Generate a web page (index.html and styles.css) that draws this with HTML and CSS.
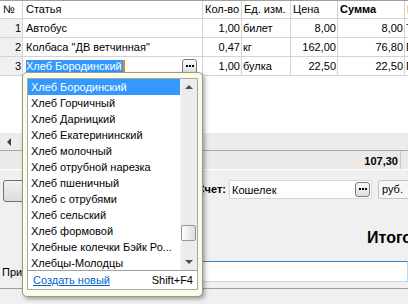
FILE: index.html
```html
<!DOCTYPE html>
<html>
<head>
<meta charset="utf-8">
<link rel="stylesheet" href="styles.css">
</head>
<body>
<div class="app">
  <div class="grid">
    <div class="row head">
      <div class="c num l">№</div>
      <div class="c art">Статья</div>
      <div class="c">Кол-во</div>
      <div class="c">Ед. изм.</div>
      <div class="c">Цена</div>
      <div class="c b">Сумма</div>
      <div class="c">Категория</div>
    </div>
    <div class="row">
      <div class="c num">1</div>
      <div class="c art">Автобус</div>
      <div class="c r">1,00</div>
      <div class="c">билет</div>
      <div class="c r">8,00</div>
      <div class="c r">8,00</div>
      <div class="c">Транспорт</div>
    </div>
    <div class="row">
      <div class="c num">2</div>
      <div class="c art">Колбаса "ДВ ветчинная"</div>
      <div class="c r">0,47</div>
      <div class="c">кг</div>
      <div class="c r">162,00</div>
      <div class="c r">76,80</div>
      <div class="c">Продукты</div>
    </div>
    <div class="row">
      <div class="c num">3</div>
      <div class="c art edit"><span class="sel">Хлеб Бородинский</span><span class="dots-btn"><svg width="9" height="3" viewBox="0 0 9 3"><rect x="0" y="0" width="2" height="2" fill="#000"/><rect x="3" y="0" width="2" height="2" fill="#000"/><rect x="6" y="0" width="2" height="2" fill="#000"/></svg></span></div>
      <div class="c r">1,00</div>
      <div class="c">булка</div>
      <div class="c r">22,50</div>
      <div class="c r">22,50</div>
      <div class="c">Продукты</div>
    </div>
  </div>
  <div class="grid-empty"></div>
  <div class="hscroll"><span class="hs-left"><span class="tri-left"></span></span></div>
  <div class="total"><span class="total-val">107,30</span></div>
  <div class="form">
    <div class="acct-row">
      <div class="btn-add"></div>
      <div class="acct-label">Счет:</div>
      <div class="acct-input"><span class="acct-text">Кошелек</span><span class="dots-btn small"><svg width="9" height="3" viewBox="0 0 9 3"><rect x="0" y="0" width="2" height="2" fill="#000"/><rect x="3" y="0" width="2" height="2" fill="#000"/><rect x="6" y="0" width="2" height="2" fill="#000"/></svg></span></div>
      <div class="combo">руб.</div>
    </div>
    <div class="itog">Итого:</div>
    <div class="note-row">
      <span class="note-label">Примечание:</span>
      <div class="note-input"></div>
    </div>
  </div>
  <div class="status"></div>

  <div class="popup">
    <div class="plist">
      <div class="pitems-wrap">
        <div class="pitems">
          <div class="pi selected">Хлеб Бородинский</div>
          <div class="pi">Хлеб Горчичный</div>
          <div class="pi">Хлеб Дарницкий</div>
          <div class="pi">Хлеб Екатерининский</div>
          <div class="pi">Хлеб молочный</div>
          <div class="pi">Хлеб отрубной нарезка</div>
          <div class="pi">Хлеб пшеничный</div>
          <div class="pi">Хлеб с отрубями</div>
          <div class="pi">Хлеб сельский</div>
          <div class="pi">Хлеб формовой</div>
          <div class="pi">Хлебные колечки Бэйк Ро...</div>
          <div class="pi">Хлебцы-Молодцы</div>
        </div>
        <div class="sb">
          <div class="sb-btn"><span class="tri-up"></span></div>
          <div class="sb-track"><div class="sb-thumb"></div></div>
          <div class="sb-btn"><span class="tri-down"></span></div>
        </div>
      </div>
      <div class="plink">
        <span class="link">Создать новый</span>
        <span class="key">Shift+F4</span>
      </div>
    </div>
  </div>
</div>
</body>
</html>
```

FILE: styles.css
```css
* { box-sizing: border-box; }
html, body { margin: 0; padding: 0; }
body {
  width: 408px;
  height: 304px;
  overflow: hidden;
  background: #f0f0f0;
  font-family: "Liberation Sans", Arial, sans-serif;
  font-size: 11px;
  color: #000;
}
.app {
  position: relative;
  width: 408px;
  height: 304px;
  overflow: hidden;
}

/* grid */
.grid {
  width: 408px;
  overflow: hidden;
  background: #fff;
  border-top: 1px solid #a0a0a0;
}
.row {
  display: grid;
  grid-template-columns: 23px 180px 39px 49px 47px 67px 90px;
  height: 19px;
  border-bottom: 1px solid #d4d4d4;
  width: 495px;
}
.row.head { height: 18px; }
.c {
  border-right: 1px solid #d4d4d4;
  padding: 0 1px 0 1px;
  line-height: 18px;
  white-space: nowrap;
  overflow: hidden;
}
.head .c { line-height: 17px; padding-left: 2px; }
.c.num { text-align: right; background: #f0f0f0; padding-right: 1px; }
.head .c.num { text-align: left; background: #fff; padding-left: 3px; }
.c.art { padding-left: 3px; }
.c.r { text-align: right; }
.c.b { font-weight: bold; }

.edit {
  display: flex;
  align-items: center;
  padding-right: 5px;
}
.sel {
  background: #3399ff;
  color: #fff;
  line-height: 13px;
  padding-right: 1px;
  border-right: 2px solid #e8871e;
}
.dots-btn {
  margin-left: auto;
  flex-shrink: 0;
  width: 15px;
  height: 15px;
  border: 1px solid #7a7a7a;
  border-radius: 3px;
  background: linear-gradient(#fafafa, #dedede);
  display: flex;
  align-items: center;
  justify-content: center;
}
.dots-btn svg { display: block; margin-left: 1px; }

.grid-empty { height: 57px; background: #fff; }
.hscroll {
  height: 17px;
  background: #ececec;
  display: flex;
}
.hs-left {
  width: 17px;
  display: flex;
  align-items: center;
  justify-content: center;
}
.tri-left {
  width: 0; height: 0;
  border-top: 4px solid transparent;
  border-bottom: 4px solid transparent;
  border-right: 4px solid #404040;
}
.total {
  height: 20px;
  background: #ece9e9;
  border-top: 1px solid #a8a8a8;
  border-bottom: 1px solid #fff;
  display: flex;
  justify-content: flex-end;
  padding-right: 7px;
}
.total-val {
  font-weight: bold;
  border-right: 1px solid #c8c8c8;
  padding-right: 2px;
  line-height: 20px;
}

/* form */
.form { padding-top: 10px; }
.acct-row {
  display: flex;
  align-items: flex-start;
}
.acct-row > * { flex-shrink: 0; }
.btn-add {
  width: 120px;
  height: 22px;
  margin-left: 3px;
  border: 1px solid #707070;
  border-radius: 3px;
  background: linear-gradient(#f2f2f2, #dcdcdc);
}
.acct-label {
  width: 103px;
  text-align: right;
  font-weight: bold;
  line-height: 19px;
}
.acct-input {
  margin-left: 3px;
  width: 143px;
  height: 19px;
  background: #fff;
  border: 1px solid #d6d6d6;
  display: flex;
  align-items: center;
  padding: 0 1px 0 2px;
}
.acct-text { flex: 1; }
.combo {
  margin-left: 6px;
  width: 50px;
  height: 19px;
  border: 1px solid #c4c4c4;
  border-radius: 2px;
  background: #f6f6f6;
  padding-left: 3px;
  line-height: 17px;
}
.itog {
  margin-top: 26px;
  padding-left: 367px;
  font-size: 16px;
  font-weight: bold;
  line-height: 20px;
  white-space: nowrap;
}
.note-row {
  margin-top: 13px;
  display: flex;
  align-items: center;
}
.note-label { padding-left: 2px; width: 70px; flex-shrink: 0; white-space: nowrap; overflow: hidden; }
.note-input {
  flex: 1;
  height: 21px;
  background: #fff;
  border: 1px solid #b9d7f0;
  border-top-color: #3d83bd;
}
.status {
  position: absolute;
  left: 0;
  top: 288px;
  width: 408px;
  height: 16px;
  border-top: 1px solid #a0a0a0;
  background: #f0f0f0;
}

/* popup */
.popup {
  position: absolute;
  left: 22px;
  top: 72px;
  width: 181px;
  height: 225px;
  background: #fbfbe6;
  border: 1px solid #9a9a8a;
  border-radius: 5px;
  box-shadow: 2px 2px 4px rgba(0,0,0,0.35);
  padding: 5px 4px 5px 4px;
}
.plist {
  border: 1px solid #a5a9ae;
  background: #fff;
}
.pitems-wrap {
  display: flex;
  height: 192px;
  border-bottom: 1px solid #a0a0a0;
}
.pitems { width: 152px; }
.pi {
  height: 16px;
  line-height: 16px;
  padding-left: 3px;
  white-space: nowrap;
  overflow: hidden;
}
.pi.selected { background: #3399ff; color: #fff; }
.sb {
  width: 17px;
  display: flex;
  flex-direction: column;
  background: #ececec;
  border-left: 1px solid #f8f8f8;
}
.sb-btn {
  height: 16px;
  display: flex;
  align-items: center;
  justify-content: center;
}
.tri-up {
  width: 0; height: 0;
  border-left: 4px solid transparent;
  border-right: 4px solid transparent;
  border-bottom: 4px solid #505050;
}
.tri-down {
  width: 0; height: 0;
  border-left: 4px solid transparent;
  border-right: 4px solid transparent;
  border-top: 4px solid #505050;
}
.sb-track {
  flex: 1;
  display: flex;
  flex-direction: column;
  justify-content: flex-end;
  padding: 0 1px 13px 0;
}
.sb-thumb {
  height: 16px;
  border: 1px solid #979797;
  border-radius: 2px;
  background: linear-gradient(90deg, #fdfdfd, #dcdcdc);
}
.plink {
  height: 18px;
  display: flex;
  justify-content: space-between;
  align-items: center;
  padding: 0 4px 0 5px;
}
.link { color: #0066cc; text-decoration: underline; }
```
